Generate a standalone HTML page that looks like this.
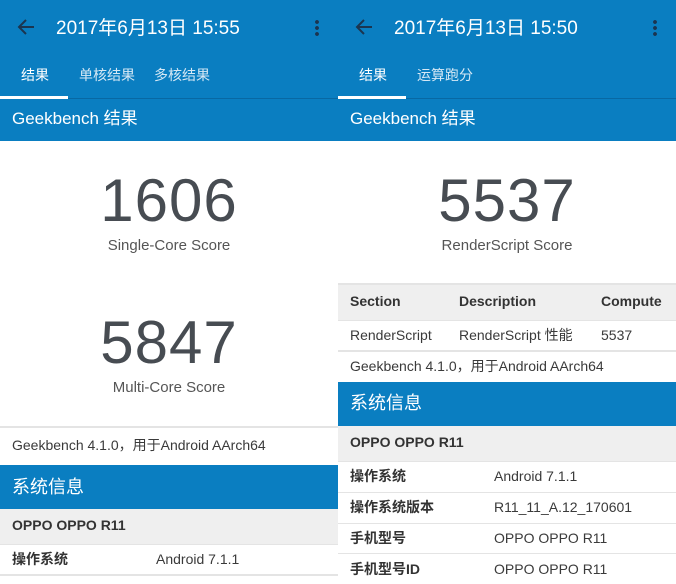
<!DOCTYPE html>
<html><head><meta charset="utf-8"><style>
*{margin:0;padding:0;box-sizing:border-box}
body{width:676px;height:584px;overflow:hidden;background:#fff;font-family:"Liberation Sans","Noto Sans CJK SC",sans-serif;position:relative}
.p{position:absolute;top:0;width:338px;height:584px;overflow:hidden;background:#fff}
.a{position:absolute;white-space:nowrap;line-height:20px}
.blue{background:#0a7ec1}
.t{color:#fff}
.g{background:#efefef}
.line{position:absolute;left:0;width:338px;height:2px;background:#e4e4e4}
.big{position:absolute;left:0;width:338px;text-align:center;font-size:60px;color:#474c52;letter-spacing:1px}
.sub{position:absolute;left:0;width:338px;text-align:center;font-size:15px;color:#555;line-height:20px}
.txt{font-size:14px;color:#3a3a3a}
.bold{font-weight:bold;font-size:14px;color:#333}
</style></head><body>
<div class="p" style="left:0">
 <div class="a blue" style="left:0;top:0;width:338px;height:141px"></div>
 <div class="a" style="left:0;top:98px;width:338px;height:1px;background:#0868a3"></div>
 <svg class="a" style="left:16px;top:17px" width="20" height="20" viewBox="0 0 20 20"><path d="M18 10H3M10 3L3 10l7 7" stroke="#1b3550" stroke-width="2" fill="none"/></svg>
 <div class="a t" style="left:56px;top:18px;font-size:19px;line-height:22px">2017年6月13日 15:55</div>
 <div class="a" style="left:315px;top:19px;width:4px;height:17px;background:radial-gradient(circle,#1b3550 1.8px,transparent 2px) 0 0/4px 6px"></div>
 <div class="a" style="left:21px;top:65px;font-size:14px;color:#fff">结果</div>
 <div class="a" style="left:79px;top:65px;font-size:14px;color:#d5e8f5">单核结果</div>
 <div class="a" style="left:154px;top:65px;font-size:14px;color:#d5e8f5">多核结果</div>
 <div class="a" style="left:0;top:96px;width:68px;height:3px;background:#fff"></div>
 <div class="a t" style="left:12px;top:108px;font-size:17px;line-height:22px">Geekbench 结果</div>
 <div class="big" style="top:166px">1606</div>
 <div class="sub" style="top:236px">Single-Core Score</div>
 <div class="big" style="top:308px">5847</div>
 <div class="sub" style="top:378px">Multi-Core Score</div>
 <div class="line" style="top:426px"></div>
 <div class="a txt" style="left:12px;top:435px">Geekbench 4.1.0，用于Android AArch64</div>
 <div class="a blue" style="left:0;top:465px;width:338px;height:44px"></div>
 <div class="a t" style="left:12px;top:475px;font-size:18px;line-height:24px">系统信息</div>
 <div class="a g" style="left:0;top:509px;width:338px;height:36px"></div>
 <div class="a bold" style="left:12px;top:515px">OPPO OPPO R11</div>
 <div class="line" style="top:544px;height:1px"></div>
 <div class="a bold" style="left:12px;top:549px">操作系统</div>
 <div class="a txt" style="left:156px;top:549px">Android 7.1.1</div>
 <div class="line" style="top:574px"></div>
</div>
<div class="p" style="left:338px">
 <div class="a blue" style="left:0;top:0;width:338px;height:141px"></div>
 <div class="a" style="left:0;top:98px;width:338px;height:1px;background:#0868a3"></div>
 <svg class="a" style="left:16px;top:17px" width="20" height="20" viewBox="0 0 20 20"><path d="M18 10H3M10 3L3 10l7 7" stroke="#1b3550" stroke-width="2" fill="none"/></svg>
 <div class="a t" style="left:56px;top:18px;font-size:19px;line-height:22px">2017年6月13日 15:50</div>
 <div class="a" style="left:315px;top:19px;width:4px;height:17px;background:radial-gradient(circle,#1b3550 1.8px,transparent 2px) 0 0/4px 6px"></div>
 <div class="a" style="left:21px;top:65px;font-size:14px;color:#fff">结果</div>
 <div class="a" style="left:79px;top:65px;font-size:14px;color:#d5e8f5">运算跑分</div>
 <div class="a" style="left:0;top:96px;width:68px;height:3px;background:#fff"></div>
 <div class="a t" style="left:12px;top:108px;font-size:17px;line-height:22px">Geekbench 结果</div>
 <div class="big" style="top:166px">5537</div>
 <div class="sub" style="top:236px">RenderScript Score</div>
 <div class="line" style="top:283px"></div>
 <div class="a g" style="left:0;top:285px;width:338px;height:35px"></div>
 <div class="a bold" style="left:12px;top:291px">Section</div>
 <div class="a bold" style="left:121px;top:291px">Description</div>
 <div class="a bold" style="left:263px;top:291px">Compute</div>
 <div class="line" style="top:320px;height:1px"></div>
 <div class="a txt" style="left:12px;top:325px">RenderScript</div>
 <div class="a txt" style="left:121px;top:325px">RenderScript 性能</div>
 <div class="a txt" style="left:263px;top:325px">5537</div>
 <div class="line" style="top:350px"></div>
 <div class="a txt" style="left:12px;top:356px">Geekbench 4.1.0，用于Android AArch64</div>
 <div class="a blue" style="left:0;top:382px;width:338px;height:44px"></div>
 <div class="a t" style="left:12px;top:391px;font-size:18px;line-height:24px">系统信息</div>
 <div class="a g" style="left:0;top:426px;width:338px;height:35px"></div>
 <div class="a bold" style="left:12px;top:432px">OPPO OPPO R11</div>
 <div class="line" style="top:461px;height:1px"></div>
 <div class="a bold" style="left:12px;top:466px">操作系统</div>
 <div class="a txt" style="left:156px;top:466px">Android 7.1.1</div>
 <div class="line" style="top:492px;height:1px"></div>
 <div class="a bold" style="left:12px;top:497px">操作系统版本</div>
 <div class="a txt" style="left:156px;top:497px">R11_11_A.12_170601</div>
 <div class="line" style="top:523px;height:1px"></div>
 <div class="a bold" style="left:12px;top:528px">手机型号</div>
 <div class="a txt" style="left:156px;top:528px">OPPO OPPO R11</div>
 <div class="line" style="top:553px;height:1px"></div>
 <div class="a bold" style="left:12px;top:559px">手机型号ID</div>
 <div class="a txt" style="left:156px;top:559px">OPPO OPPO R11</div>
</div>
</body></html>
